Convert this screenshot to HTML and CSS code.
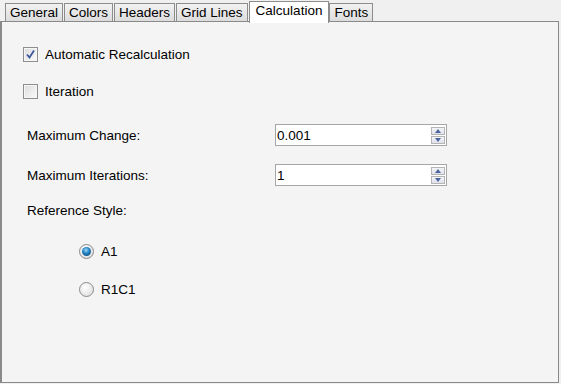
FILE: index.html
```html
<!DOCTYPE html>
<html lang="en">
<head>
    <meta charset="UTF-8">
    <title>Options - Calculation</title>
    <link rel="stylesheet" href="styles.css">
</head>
<body>
    <div class="tabs">
        <div class="tab">General</div>
        <div class="tab">Colors</div>
        <div class="tab">Headers</div>
        <div class="tab">Grid Lines</div>
        <div class="tab current">Calculation</div>
        <div class="tab">Fonts</div>
    </div>

    <div class="panel">
        <label class="check row1">
            <span class="box checked">
                <svg width="11" height="11" viewBox="0 0 11 11"><path d="M2 5.5 L4.5 8.5 L9 1.5" fill="none" stroke="#3c5699" stroke-width="1.8"/></svg>
            </span>
            Automatic Recalculation
        </label>

        <label class="check row2">
            <span class="box"></span>
            Iteration
        </label>

        <div class="field row3">
            <span class="name">Maximum Change:</span>
            <div class="spin">
                <span class="value">0.001</span>
                <div class="arrows">
                    <span class="up"></span>
                    <span class="down"></span>
                </div>
            </div>
        </div>

        <div class="field row4">
            <span class="name">Maximum Iterations:</span>
            <div class="spin">
                <span class="value">1</span>
                <div class="arrows">
                    <span class="up"></span>
                    <span class="down"></span>
                </div>
            </div>
        </div>

        <div class="caption row5">Reference Style:</div>

        <div class="options">
            <label class="radio row6"><span class="dot on"></span>A1</label>
            <label class="radio row7"><span class="dot"></span>R1C1</label>
        </div>
    </div>
</body>
</html>
```

FILE: styles.css
```css
*{
    margin: 0;
    padding: 0;
    box-sizing: border-box;
}

html, body{
    height: 100%;
}

body{
    background: #f0f0f0;
    font-family: "Liberation Sans", Arial, sans-serif;
    font-size: 13.5px;
    color: #000;
    display: flex;
    flex-direction: column;
    overflow: hidden;
}

/* tab strip */
.tabs{
    display: flex;
    align-items: flex-end;
    height: 22px;
    padding-left: 5px;
    position: relative;
    z-index: 1;
}

.tab{
    height: 18px;
    line-height: 17px;
    padding: 0 4px;
    margin-right: 1px;
    border: 1px solid #8c8c8c;
    border-bottom: none;
    background: linear-gradient(#f2f2f2, #dcdcdc);
    margin-bottom: 1px;
}

.tab.current{
    height: 22px;
    line-height: 18px;
    padding: 0 6px;
    background: #fff;
    margin: 0 0 -1px 0;
    border-color: #8c8c8c;
    position: relative;
}

/* page body */
.panel{
    flex: 1;
    margin: -1px 2px 1px 0;
    border: 1px solid #8a8a8a;
    border-left-width: 2px;
    background: #f4f4f4;
    padding: 22px 0 0 21px;
    display: flex;
    flex-direction: column;
}

.check, .radio{
    display: flex;
    align-items: center;
    height: 20px;
    gap: 7px;
}

.box{
    width: 15px;
    height: 15px;
    border: 1px solid #8e8e8e;
    background: linear-gradient(135deg, #dcdcdc, #fbfbfb);
    box-shadow: inset 0 0 0 1px #f6f6f6;
    display: flex;
    align-items: center;
    justify-content: center;
}

.row2{ margin-top: 17px; }
.row3{ margin-top: 23px; }
.row4{ margin-top: 18px; }
.row5{ margin-top: 15px; }
.row6{ margin-top: 0; }
.row7{ margin-top: 18px; }

.field{
    display: flex;
    align-items: center;
    height: 22px;
    padding-left: 4px;
}

.field .name{
    width: 248px;
}

.spin{
    width: 172px;
    height: 22px;
    border: 1px solid #a6a6a6;
    background: #fff;
    display: flex;
    align-items: center;
    justify-content: space-between;
    padding: 0 1px 0 1px;
}

.arrows{
    display: flex;
    flex-direction: column;
    gap: 1px;
}

.arrows span{
    width: 14px;
    height: 8px;
    border: 1px solid #b4b4b4;
    background: linear-gradient(#f4f4f8, #dfe2ea);
    position: relative;
}

.arrows span::after{
    content: "";
    position: absolute;
    left: 3px;
    border-left: 3.5px solid transparent;
    border-right: 3.5px solid transparent;
}

.arrows .up::after{
    top: 1px;
    border-bottom: 4px solid #4d63a0;
}

.arrows .down::after{
    top: 1px;
    border-top: 4px solid #4d63a0;
}

.caption{
    height: 20px;
    line-height: 20px;
    padding-left: 4px;
}

.options{
    display: flex;
    flex-direction: column;
    padding-left: 56px;
    margin-top: 20px;
}

.dot{
    width: 15px;
    height: 15px;
    border-radius: 50%;
    border: 1px solid #8a8a8a;
    background: radial-gradient(circle at 40% 35%, #ffffff, #d8d8d8);
    display: flex;
    align-items: center;
    justify-content: center;
}

.dot.on::after{
    content: "";
    width: 9px;
    height: 9px;
    border-radius: 50%;
    background: radial-gradient(circle at 45% 35%, #9fd8f6 0, #1d7fc2 45%, #0c3f6e 100%);
}
```
